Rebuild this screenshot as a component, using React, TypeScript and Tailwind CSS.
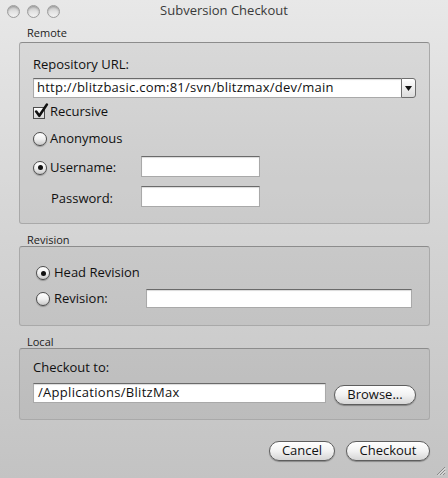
import React from "react";

const font = { fontFamily: '"Open Sans", "DejaVu Sans", sans-serif' };

function Radio({ checked }: { checked?: boolean }) {
  return (
    <div className="w-[14px] h-[14px] rounded-full border border-[#4d4d4d] bg-gradient-to-b from-[#ffffff] via-[#f0f0f0] to-[#c9c9c9] shadow-[0_1px_1px_rgba(0,0,0,0.25)] flex items-center justify-center shrink-0">
      {checked && <div className="w-[5px] h-[5px] rounded-full bg-[#111]" />}
    </div>
  );
}

function Checkbox() {
  return (
    <div className="relative w-[12px] h-[12px] border border-[#4d4d4d] bg-gradient-to-b from-white to-[#d8d8d8] shrink-0 mt-[2px]">
      <svg className="absolute -top-[5px] left-[0px]" width="15" height="16" viewBox="0 0 15 16">
        <path d="M2.2 8.6 L5.3 12.8 L12.8 1.6" fill="none" stroke="#111" strokeWidth="2.6" strokeLinecap="round" strokeLinejoin="round" />
      </svg>
    </div>
  );
}

function TextField({ className, children }: { className?: string; children?: React.ReactNode }) {
  return (
    <div className={"bg-white border border-[#a9a9a9] border-t-[#6a6a6a] shadow-[inset_0_1px_1px_rgba(0,0,0,0.15)] flex items-center " + (className ?? "")}>
      {children}
    </div>
  );
}

function PillButton({ label, className }: { label: string; className?: string }) {
  return (
    <div className={"h-[20px] rounded-full border border-[#5e5e5e] bg-gradient-to-b from-[#ffffff] via-[#f2f2f2] to-[#d6d6d6] shadow-[0_1px_1px_rgba(0,0,0,0.3)] flex items-center justify-center text-[13px] text-[#111] " + (className ?? "")}>
      {label}
    </div>
  );
}

function Group({ className, children }: { className?: string; children: React.ReactNode }) {
  return (
    <div className={"rounded-[3px] border border-[#a9a9a9] border-t-[#8c8c8c] bg-black/[0.05] " + (className ?? "")}>
      {children}
    </div>
  );
}

function SectionLabel({ text, className }: { text: string; className?: string }) {
  return <div className={"text-[11px] leading-[13px] text-[#1c1c1c] pl-[8px] " + (className ?? "")}>{text}</div>;
}

export default function App() {
  return (
    <div
      className="relative w-[448px] h-[478px] overflow-hidden bg-gradient-to-b from-[#e8e8e8] via-[#d4d4d4] to-[#c3c3c3] text-[#111]"
      style={font}
    >
      {/* Title bar */}
      <div className="relative h-[22px] flex items-center">
        <div className="flex gap-[7px] pl-[7px]">
          {[0, 1, 2].map((i) => (
            <div
              key={i}
              className="w-[13px] h-[13px] rounded-full border border-[#9c9c9c] bg-gradient-to-b from-[#c4c4c4] via-[#e2e2e2] to-[#f4f4f4] shadow-[inset_0_1px_2px_rgba(0,0,0,0.25)]"
            />
          ))}
        </div>
        <div className="absolute inset-0 flex items-center justify-center text-[13px] text-[#3a3a3a]">
          Subversion Checkout
        </div>
      </div>

      <div className="pl-[19px] pr-[18px]">
        <SectionLabel text="Remote" className="mt-[4px] h-[16px]" />
        <Group className="h-[182px] px-[13px] pt-[14px]">
          <div className="h-[16px] flex items-center text-[13px]">Repository URL:</div>
          <div className="mt-[5px] h-[20px] flex">
            <TextField className="flex-1 h-[20px] border-r-0 pl-[3px] text-[13px] tracking-[0.25px]">
              http://blitzbasic.com:81/svn/blitzmax/dev/main
            </TextField>
            <div className="w-[15px] h-[20px] rounded-r-[3px] border border-[#6e6e6e] bg-gradient-to-b from-white to-[#dcdcdc] flex items-center justify-center">
              <svg width="7" height="5" viewBox="0 0 7 5">
                <path d="M0 0 H7 L3.5 5 Z" fill="#111" />
              </svg>
            </div>
          </div>
          <div className="mt-[6px] h-[16px] flex items-center gap-[4px] text-[13px]">
            <Checkbox />
            <span className="ml-[1px]">Recursive</span>
          </div>
          <div className="mt-[11px] h-[16px] flex items-center gap-[3px] text-[13px]">
            <Radio />
            <span>Anonymous</span>
          </div>
          <div className="mt-[9px] h-[21px] flex items-center text-[13px]">
            <div className="w-[108px] flex items-center gap-[3px] mt-[2px]">
              <Radio checked />
              <span>Username:</span>
            </div>
            <TextField className="w-[119px] h-[21px]" />
          </div>
          <div className="mt-[9px] h-[21px] flex items-center text-[13px]">
            <div className="w-[108px] pl-[18px] mt-[4px]">Password:</div>
            <TextField className="w-[119px] h-[21px]" />
          </div>
        </Group>

        <SectionLabel text="Revision" className="mt-[9px] h-[13px]" />
        <Group className="h-[80px] pl-[16px] pr-[17px] pt-[16px]">
          <div className="h-[20px] flex items-center gap-[4px] text-[13px]">
            <Radio checked />
            <span>Head Revision</span>
          </div>
          <div className="mt-[6px] h-[19px] flex items-center text-[13px]">
            <div className="w-[110px] flex items-center gap-[4px]">
              <Radio />
              <span>Revision:</span>
            </div>
            <TextField className="flex-1 h-[19px]" />
          </div>
        </Group>

        <SectionLabel text="Local" className="mt-[9px] h-[13px]" />
        <Group className="h-[72px] px-[13px] pt-[11px]">
          <div className="h-[16px] flex items-center text-[13px]">Checkout to:</div>
          <div className="mt-[7px] h-[22px] flex items-start gap-[8px]">
            <TextField className="w-[293px] h-[20px] pl-[4px] text-[13px] tracking-[0.3px]">
              /Applications/BlitzMax
            </TextField>
            <PillButton label="Browse..." className="w-[82px] mt-[2px]" />
          </div>
        </Group>

        <div className="mt-[21px] flex justify-end gap-[11px]">
          <PillButton label="Cancel" className="w-[66px]" />
          <PillButton label="Checkout" className="w-[84px]" />
        </div>
      </div>

      {/* resize grip */}
      <svg className="absolute right-[2px] bottom-[2px]" width="12" height="12" viewBox="0 0 12 12">
        <path d="M11 3 L3 11 M11 6 L6 11 M11 9 L9 11" stroke="#8a8a8a" strokeWidth="1" />
        <path d="M11.5 4 L4 11.5 M11.5 7 L7 11.5" stroke="#f0f0f0" strokeWidth="0.8" />
      </svg>
    </div>
  );
}
